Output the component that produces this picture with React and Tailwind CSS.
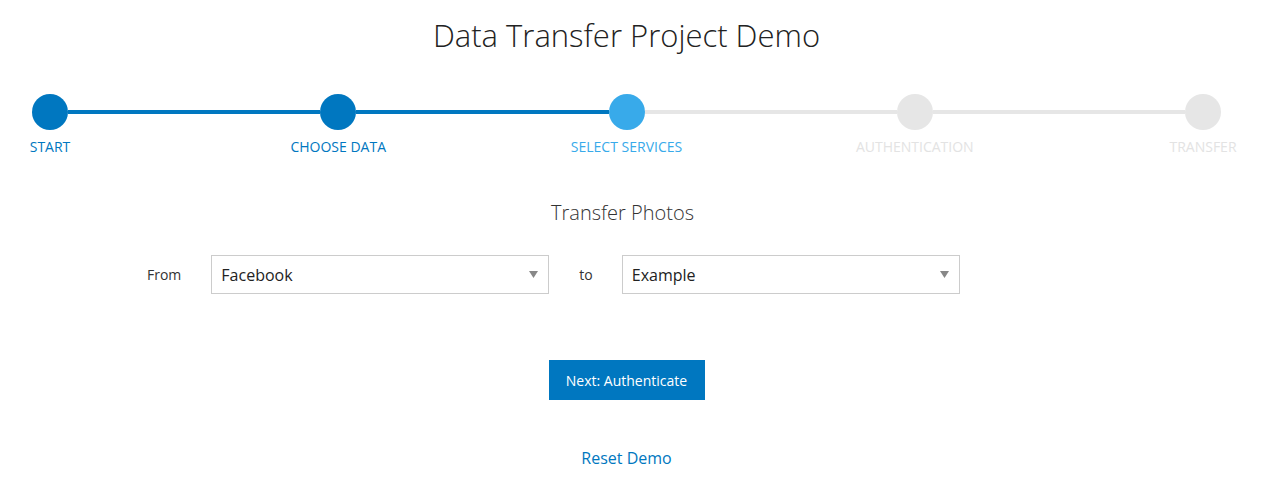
import React from "react";

const steps = [
  { label: "START", state: "done" },
  { label: "CHOOSE DATA", state: "done" },
  { label: "SELECT SERVICES", state: "current" },
  { label: "AUTHENTICATION", state: "todo" },
  { label: "TRANSFER", state: "todo" },
];

function Circle({ state, label }) {
  const circle =
    state === "done" ? "bg-[#0077c0]" : state === "current" ? "bg-[#38aaea]" : "bg-[#e6e6e6]";
  const text =
    state === "done" ? "text-[#0077c0]" : state === "current" ? "text-[#38aaea]" : "text-[#e3e3e3]";
  return (
    <div className="flex flex-col items-center w-9 shrink-0">
      <div className={`w-9 h-9 rounded-full ${circle}`} />
      <div className={`mt-[7px] whitespace-nowrap text-[14px] leading-[20px] ${text}`}>{label}</div>
    </div>
  );
}

function Select({ value }) {
  return (
    <div className="w-[338px] h-[39px] border border-[#cccccc] bg-white flex items-center justify-between pl-[9px] pr-[10px]">
      <span className="text-[16px] text-[#222]">{value}</span>
      <svg width="9" height="7" viewBox="0 0 9 7">
        <path d="M0 0 L9 0 L4.5 7 Z" fill="#888" />
      </svg>
    </div>
  );
}

export default function App() {
  return (
    <div
      className="min-h-[493px] bg-white text-[#333]"
      style={{ fontFamily: '"Open Sans", sans-serif' }}
    >
      <div className="w-[1253px] flex flex-col items-center">
        <h1 className="mt-[14px] text-[31px] leading-[42px] font-light text-[#222]">
          Data Transfer Project Demo
        </h1>
        <div className="mt-[38px] w-full px-[32px]">
          <div className="flex items-start">
            {steps.map((s, i) => (
              <React.Fragment key={s.label}>
                <Circle state={s.state} label={s.label} />
                {i < steps.length - 1 && (
                  <div
                    className={`flex-1 h-[4px] mt-[16px] ${
                      i < 2 ? "bg-[#0077c0]" : "bg-[#e6e6e6]"
                    }`}
                  />
                )}
              </React.Fragment>
            ))}
          </div>
        </div>
        <div className="mt-[43px] mr-[8px] text-[20px] leading-[26px] font-light text-[#333]">Transfer Photos</div>
        <div className="self-start ml-[147px] mt-[29px] flex items-center">
          <span className="text-[14px] text-[#333]">From</span>
          <div className="ml-[30px]">
            <Select value="Facebook" />
          </div>
          <span className="ml-[30px] text-[14px] text-[#333]">to</span>
          <div className="ml-[29px]">
            <Select value="Example" />
          </div>
        </div>
        <button className="mt-[66px] w-[156px] h-[40px] bg-[#0077c0] text-white text-[14px]">
          Next: Authenticate
        </button>
        <a className="mt-[46px] text-[16px] text-[#0077c0] leading-[24px]">Reset Demo</a>
      </div>
    </div>
  );
}
